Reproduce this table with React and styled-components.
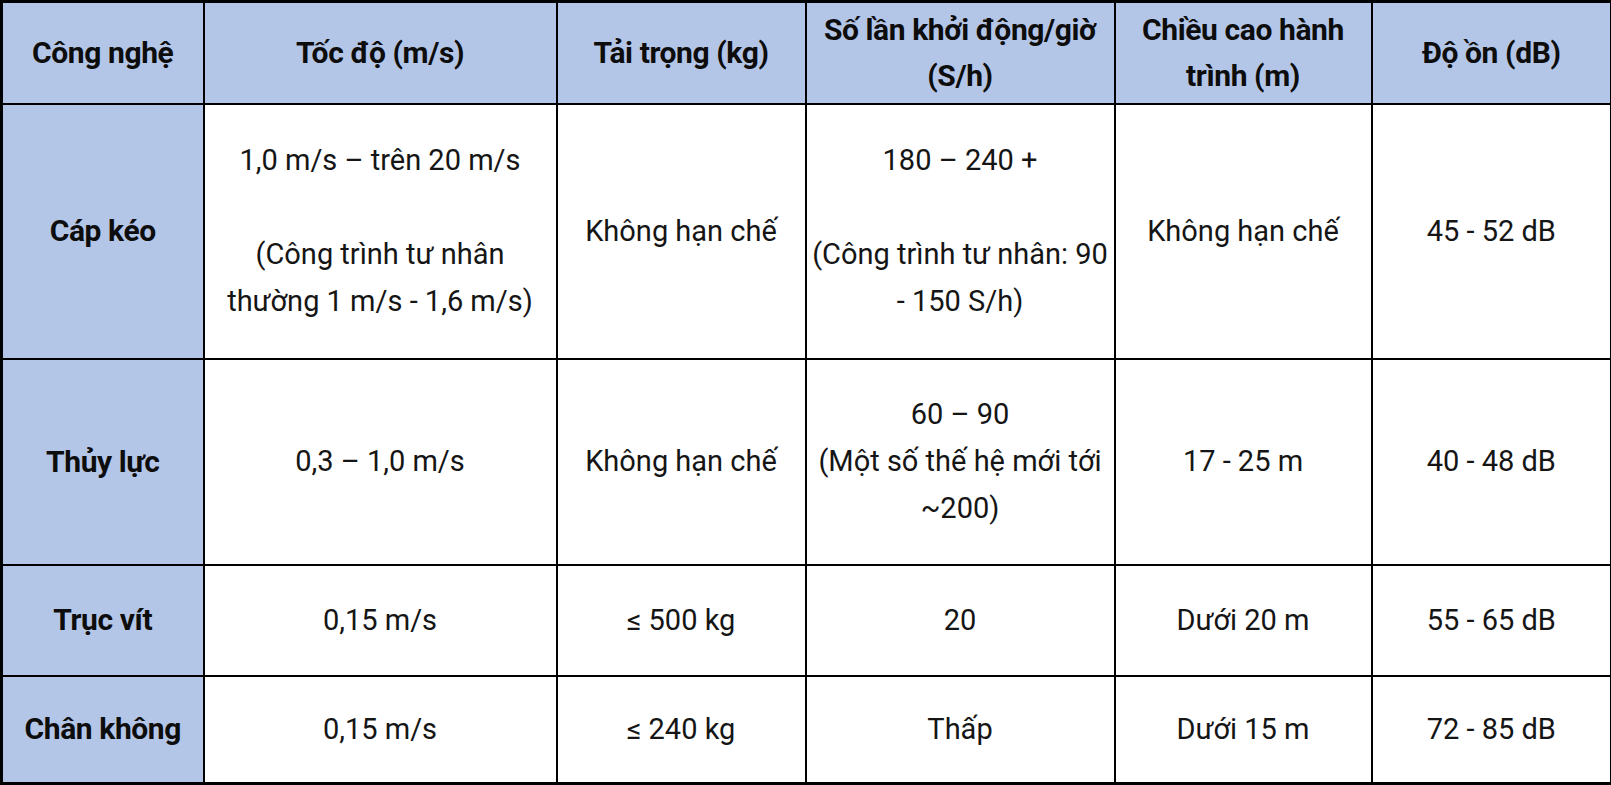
import React from "react";
import styled, { createGlobalStyle } from "styled-components";

const Global = createGlobalStyle`
  html, body { margin: 0; padding: 0; background: #ffffff; }
  body { font-family: Roboto, "Noto Sans", "Liberation Sans", sans-serif; }
`;

const Table = styled.table`
  border-collapse: collapse;
  table-layout: fixed;
  width: 1610px;
  border: 3px solid #000;
`;

const Row = styled.tr`
  height: ${(p) => p.$h}px;
`;

const HeadCell = styled.th`
  background: #b4c6e7;
  border: 2px solid #000;
  font-weight: 700;
  font-size: 30px;
  line-height: 46px;
  color: #0d0d0d;
  text-align: center;
  vertical-align: middle;
  padding: 0 4px;
  letter-spacing: -0.4px;
  white-space: nowrap;
`;

const LabelCell = styled(HeadCell)``;

const Cell = styled.td`
  border: 2px solid #000;
  font-weight: 400;
  font-size: 29px;
  line-height: 47px;
  color: #151515;
  text-align: center;
  vertical-align: middle;
  padding: 0 3px;
  white-space: nowrap;
`;

const Line = styled.div`
  min-height: 47px;
`;

const cols = [202, 353, 249, 309, 257, 240];

const headers = [
  ["Công nghệ"],
  ["Tốc độ (m/s)"],
  ["Tải trọng (kg)"],
  ["Số lần khởi động/giờ", "(S/h)"],
  ["Chiều cao hành", "trình (m)"],
  ["Độ ồn (dB)"],
];

const rows = [
  {
    h: 255,
    label: "Cáp kéo",
    cells: [
      ["1,0 m/s – trên 20 m/s", "", "(Công trình tư nhân", "thường 1 m/s - 1,6 m/s)"],
      ["Không hạn chế"],
      ["180 – 240 +", "", "(Công trình tư nhân: 90", "- 150 S/h)"],
      ["Không hạn chế"],
      ["45 - 52 dB"],
    ],
  },
  {
    h: 206,
    label: "Thủy lực",
    cells: [
      ["0,3 – 1,0 m/s"],
      ["Không hạn chế"],
      ["60 – 90", "(Một số thế hệ mới tới", "~200)"],
      ["17 - 25 m"],
      ["40 - 48 dB"],
    ],
  },
  {
    h: 111,
    label: "Trục vít",
    cells: [["0,15 m/s"], ["≤ 500 kg"], ["20"], ["Dưới 20 m"], ["55 - 65 dB"]],
  },
  {
    h: 108,
    label: "Chân không",
    cells: [["0,15 m/s"], ["≤ 240 kg"], ["Thấp"], ["Dưới 15 m"], ["72 - 85 dB"]],
  },
];

export default function App() {
  return (
    <>
      <Global />
      <Table>
        <colgroup>
          {cols.map((w, i) => (
            <col key={i} style={{ width: w }} />
          ))}
        </colgroup>
        <thead>
          <Row $h={102}>
            {headers.map((lines, i) => (
              <HeadCell key={i}>
                {lines.map((l, j) => (
                  <div key={j}>{l}</div>
                ))}
              </HeadCell>
            ))}
          </Row>
        </thead>
        <tbody>
          {rows.map((r, i) => (
            <Row key={i} $h={r.h}>
              <LabelCell as="td">{r.label}</LabelCell>
              {r.cells.map((lines, j) => (
                <Cell key={j}>
                  {lines.map((l, k) => (
                    <Line key={k}>{l}</Line>
                  ))}
                </Cell>
              ))}
            </Row>
          ))}
        </tbody>
      </Table>
    </>
  );
}
